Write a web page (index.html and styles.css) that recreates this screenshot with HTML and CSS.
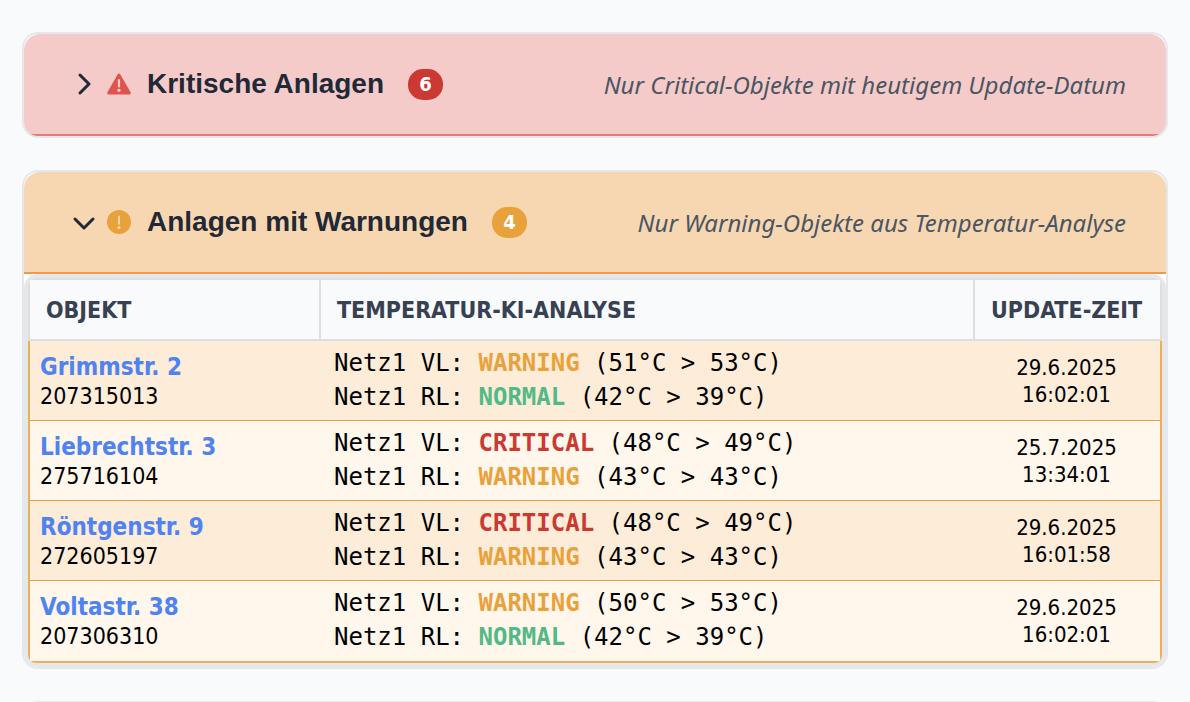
FILE: index.html
```html
<!DOCTYPE html>
<html lang="de">
<head>
<meta charset="utf-8">
<title>Anlagen</title>
<link rel="stylesheet" href="styles.css">
</head>
<body>
<main class="page">
  <section class="card">
    <header class="card-head critical-head">
      <h2 class="card-title">
        <button class="toggle" type="button" aria-expanded="false">
          <svg class="chevron" viewBox="0 0 24 24" aria-hidden="true"><path d="M8 3l9 9-9 9"/></svg>
          <svg class="state" viewBox="0 0 24 24" aria-hidden="true"><path d="M12 3L22.4 21H1.6Z" fill="#df544d" stroke="#df544d" stroke-width="2.8" stroke-linejoin="round"/><path d="M12 8v6.4" stroke="#f5cbc9" stroke-width="2.2" stroke-linecap="round"/><circle cx="12" cy="18.3" r="1.6" fill="#f5cbc9"/></svg>
          <span>Kritische Anlagen</span>
        </button>
        <span class="badge critical-badge">6</span>
      </h2>
      <p class="hint">Nur Critical-Objekte mit heutigem Update-Datum</p>
    </header>
  </section>

  <section class="card">
    <header class="card-head warning-head">
      <h2 class="card-title">
        <button class="toggle" type="button" aria-expanded="true">
          <svg class="chevron" viewBox="0 0 24 24" aria-hidden="true"><path d="M3 9l9 9 9-9"/></svg>
          <svg class="state" viewBox="0 0 24 24" aria-hidden="true"><circle cx="12" cy="12" r="12" fill="#e9a23b"/><path d="M12 6.8v7" stroke="#f7d7b1" stroke-width="2" stroke-linecap="round"/><circle cx="12" cy="17.4" r="1.5" fill="#f7d7b1"/></svg>
          <span>Anlagen mit Warnungen</span>
        </button>
        <span class="badge warning-badge">4</span>
      </h2>
      <p class="hint">Nur Warning-Objekte aus Temperatur-Analyse</p>
    </header>
    <div class="frame">
      <div class="frame">
        <table class="list">
          <colgroup><col class="col-object"><col><col class="col-time"></colgroup>
          <thead>
            <tr><th scope="col">OBJEKT</th><th scope="col">TEMPERATUR-KI-ANALYSE</th><th scope="col">UPDATE-ZEIT</th></tr>
          </thead>
          <tbody>
            <tr>
              <td class="object"><a href="#207315013">Grimmstr. 2</a><br>207315013</td>
              <td class="analysis">Netz1 VL: <b class="warning">WARNING</b> (51°C &gt; 53°C)<br>Netz1 RL: <b class="normal">NORMAL</b> (42°C &gt; 39°C)</td>
              <td class="time">29.6.2025<br>16:02:01</td>
            </tr>
            <tr>
              <td class="object"><a href="#275716104">Liebrechtstr. 3</a><br>275716104</td>
              <td class="analysis">Netz1 VL: <b class="critical">CRITICAL</b> (48°C &gt; 49°C)<br>Netz1 RL: <b class="warning">WARNING</b> (43°C &gt; 43°C)</td>
              <td class="time">25.7.2025<br>13:34:01</td>
            </tr>
            <tr>
              <td class="object"><a href="#272605197">Röntgenstr. 9</a><br>272605197</td>
              <td class="analysis">Netz1 VL: <b class="critical">CRITICAL</b> (48°C &gt; 49°C)<br>Netz1 RL: <b class="warning">WARNING</b> (43°C &gt; 43°C)</td>
              <td class="time">29.6.2025<br>16:01:58</td>
            </tr>
            <tr>
              <td class="object"><a href="#207306310">Voltastr. 38</a><br>207306310</td>
              <td class="analysis">Netz1 VL: <b class="warning">WARNING</b> (50°C &gt; 53°C)<br>Netz1 RL: <b class="normal">NORMAL</b> (42°C &gt; 39°C)</td>
              <td class="time">29.6.2025<br>16:02:01</td>
            </tr>
          </tbody>
        </table>
      </div>
    </div>
  </section>

  <section class="card next-card"></section>
</main>
</body>
</html>
```
FILE: styles.css
```css
* { box-sizing: border-box; }

html { height: 100%; overflow: hidden; }

body {
  margin: 0;
  height: 100%;
  overflow: hidden;
  background: #f9fafc;
  color: #000;
  font-family: "DejaVu Sans Condensed", "Noto Sans", sans-serif;
}

.page {
  display: flex;
  flex-direction: column;
  gap: 32px;
  padding: 32px 22px;
}

.card {
  flex-shrink: 0;
  overflow: hidden;
  background: #fff;
  border: 2px solid #e5e7eb;
  border-radius: 16px;
}

.next-card { height: 106px; }

.card-head {
  display: flex;
  align-items: center;
  justify-content: space-between;
  gap: 24px;
  min-height: 102px;
  padding: 0 40px 0 48px;
  border-bottom: 2px solid;
  border-radius: 16px 16px 0 0;
}

.critical-head { background: #f5cbc9; border-color: #e87a74; }
.warning-head { background: #f7d7b1; border-color: #f0984f; }

.card-title {
  display: flex;
  align-items: center;
  gap: 24px;
  margin: 0;
}

.toggle {
  display: flex;
  align-items: center;
  padding: 0;
  border: 0;
  background: none;
  color: #1f2937;
  font: bold 28px/32px "Liberation Sans", Arial, sans-serif;
  cursor: pointer;
}

.chevron {
  width: 24px;
  height: 24px;
  margin-right: 11px;
  fill: none;
  stroke: #1f2937;
  stroke-width: 3;
  stroke-linecap: round;
  stroke-linejoin: round;
}

.state { width: 24px; height: 24px; margin-right: 16px; }

.badge {
  min-width: 35px;
  border-radius: 15px;
  color: #fff;
  font-size: 20px;
  line-height: 31px;
  text-align: center;
}

.critical-badge { background: #ca3a32; }
.warning-badge { background: #e9a23b; }

.hint {
  margin: 0;
  padding-top: 2px;
  color: #4b5563;
  font-family: "Noto Sans", sans-serif;
  font-size: 24px;
  font-style: italic;
  line-height: 32px;
}

.frame {
  overflow: hidden;
  background: #e5e7eb;
  border: 2px solid #e5e7eb;
  border-radius: 14px;
}

.frame .frame { border-radius: 10px; }

.list {
  width: 100%;
  table-layout: fixed;
  border-spacing: 0;
}

.col-object { width: 291px; }
.col-time { width: 189px; }

th {
  height: 63px;
  padding: 0 0 0 16px;
  background: #f8fafc;
  border: 2px solid #dcdee0;
  border-right-width: 0;
  color: #374151;
  font-size: 23px;
  text-align: left;
}

th:last-child { border-right-width: 2px; }

td {
  height: 80px;
  padding: 0;
  background: #fff6ec;
  border-bottom: 1px solid #e9a23b;
}

tr:nth-child(odd) td { background: #fcecd8; }
tr:last-child td { height: 82px; border-bottom: 2px solid #e8b05c; }

.object {
  padding: 2px 0 0 10px;
  border-left: 2px solid #e8b05c;
  font-size: 23px;
  line-height: 29px;
}

.object a {
  color: #4f83f1;
  font-size: 24px;
  font-weight: bold;
  text-decoration: none;
}

.analysis {
  padding: 0 0 2px 15px;
  font: 24px/34px "DejaVu Sans Mono", monospace;
}

.warning { color: #e9a23b; }
.critical { color: #ca3a32; }
.normal { color: #54b887; }

.time {
  border-right: 2px solid #e8b05c;
  font-size: 22px;
  line-height: 27px;
  text-align: center;
}
```
